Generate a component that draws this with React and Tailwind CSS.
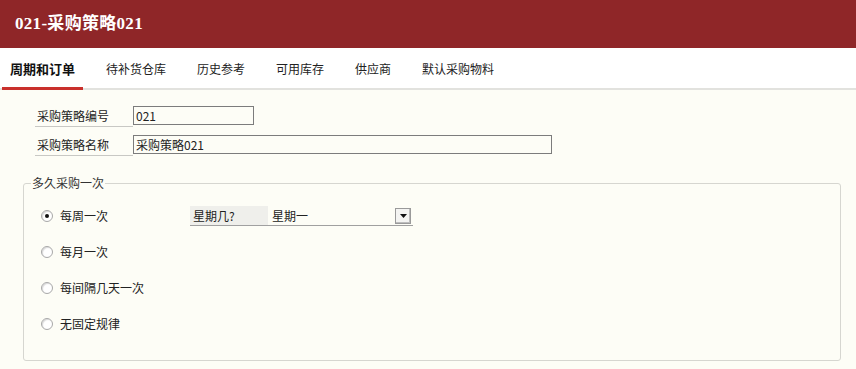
import React from "react";

const cjk = { fontFamily: '"Noto Sans CJK SC", "Liberation Sans", sans-serif' };

function Radio({ checked, label }) {
  return (
    <div className="flex items-center h-[36px]">
      <span className="relative w-[12px] h-[12px] rounded-full border border-[#a8a8a8] bg-white flex items-center justify-center shadow-[inset_1px_1px_1px_rgba(0,0,0,0.15)]">
        {checked && <span className="w-[4px] h-[4px] rounded-full bg-[#111]" />}
      </span>
      <span className="ml-[7px] text-[12px] text-[#222]">{label}</span>
    </div>
  );
}

export default function App() {
  const tabs = ["待补货仓库", "历史参考", "可用库存", "供应商", "默认采购物料"];
  return (
    <div className="w-[856px] h-[369px] overflow-hidden bg-[#fdfdf6] flex flex-col" style={cjk}>
      <div className="h-[48px] bg-[#8f2628] flex items-center pl-[15px]">
        <span
          className="text-white text-[17px] font-bold tracking-[0.3px]"
          style={{ fontFamily: '"Liberation Serif", "Noto Sans CJK SC", serif' }}
        >
          021-采购策略021
        </span>
      </div>
      <div className="h-[42px] bg-white border-b-[2px] border-[#e2e2de] flex items-end pl-[2px]">
        <div className="px-[8px] h-[40px] flex items-center border-b-[3px] border-[#c9302c] -mb-[2px] text-[13px] font-bold text-[#111]">
          周期和订单
        </div>
        <div className="flex ml-[23px] gap-[31px] h-[40px] items-center -mb-[2px] pb-[3px] text-[12px] text-[#222]">
          {tabs.map((t) => (
            <span key={t}>{t}</span>
          ))}
        </div>
      </div>
      <div className="pt-[16px] pl-[35px] flex flex-col gap-[8px]">
        <div className="flex items-end">
          <div className="w-[98px] h-[21px] border-b border-[#c8c8c4] pl-[2px] text-[12px] text-[#222] flex items-center">
            采购策略编号
          </div>
          <div className="w-[121px] h-[19px] border border-[#7c7c7c] bg-[#fdfdf6] text-[12px] text-[#222] pl-[2px] flex items-center mb-[2px]">
            021
          </div>
        </div>
        <div className="flex items-end">
          <div className="w-[98px] h-[21px] border-b border-[#c8c8c4] pl-[2px] text-[12px] text-[#222] flex items-center">
            采购策略名称
          </div>
          <div className="w-[419px] h-[19px] border border-[#7c7c7c] bg-[#fdfdf6] text-[12px] text-[#222] pl-[2px] flex items-center mb-[2px]">
            采购策略021
          </div>
        </div>
      </div>
      <fieldset className="mx-[15px] ml-[23px] mt-[19px] border border-[#d6d6d0] rounded-[3px] h-[186px] pl-[17px] pt-[7px]">
        <legend className="ml-[-10px] px-[1px] text-[12px] text-[#333] leading-[16px]">多久采购一次</legend>
        <div className="flex items-center">
          <div className="w-[149px]">
            <Radio checked label="每周一次" />
          </div>
          <div className="flex items-center h-[20px] border-b border-[#a0a0a0] w-[223px]">
            <div className="w-[78px] h-full bg-[#efefeb] text-[12px] text-[#222] pl-[3px] flex items-center">星期几?</div>
            <div className="flex-1 text-[12px] text-[#222] pl-[4px] flex items-center">星期一</div>
            <div className="w-[16px] h-[16px] mr-[2px] border border-[#9a9a9a] bg-[#f4f4f2] flex items-center justify-center shadow-[inset_-1px_-1px_0_#bdbdbd]">
              <svg width="7" height="4" viewBox="0 0 7 4"><path d="M0 0h7L3.5 4z" fill="#111" /></svg>
            </div>
          </div>
        </div>
        <Radio label="每月一次" />
        <Radio label="每间隔几天一次" />
        <Radio label="无固定规律" />
      </fieldset>
    </div>
  );
}
